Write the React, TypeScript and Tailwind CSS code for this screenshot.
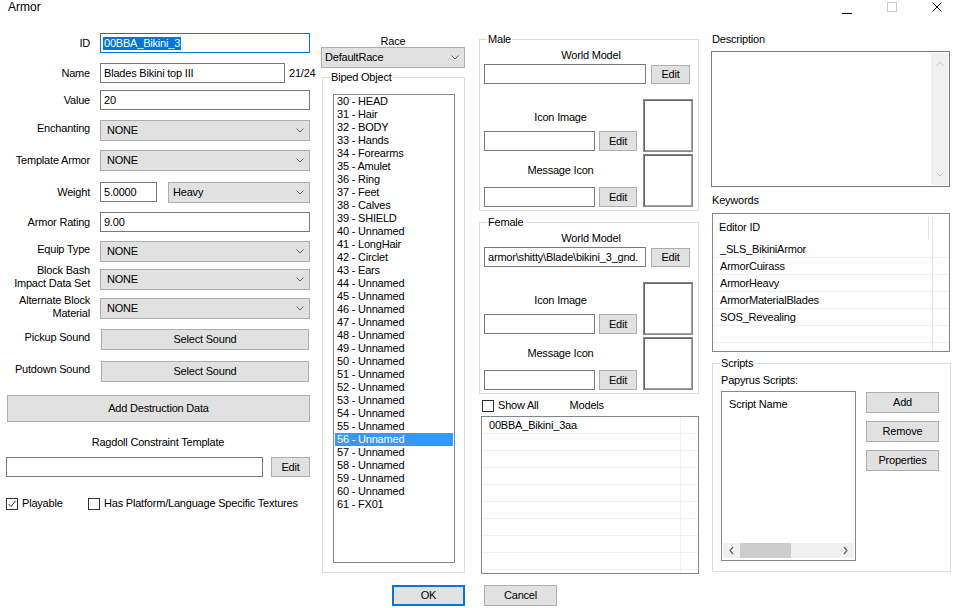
import React from "react";

const biped = [
  "30 - HEAD", "31 - Hair", "32 - BODY", "33 - Hands", "34 - Forearms", "35 - Amulet",
  "36 - Ring", "37 - Feet", "38 - Calves", "39 - SHIELD", "40 - Unnamed", "41 - LongHair",
  "42 - Circlet", "43 - Ears", "44 - Unnamed", "45 - Unnamed", "46 - Unnamed", "47 - Unnamed",
  "48 - Unnamed", "49 - Unnamed", "50 - Unnamed", "51 - Unnamed", "52 - Unnamed", "53 - Unnamed",
  "54 - Unnamed", "55 - Unnamed", "56 - Unnamed", "57 - Unnamed", "58 - Unnamed", "59 - Unnamed",
  "60 - Unnamed", "61 - FX01",
];

const keywords = ["_SLS_BikiniArmor", "ArmorCuirass", "ArmorHeavy", "ArmorMaterialBlades", "SOS_Revealing", "", ""];

function Chevron({ color = "#606060", up = false }: { color?: string; up?: boolean }) {
  return (
    <svg width="8" height="5" viewBox="0 0 8 5" className="shrink-0">
      <polyline points={up ? "0.5,4.5 4,1 7.5,4.5" : "0.5,0.5 4,4 7.5,0.5"} fill="none" stroke={color} strokeWidth="1" />
    </svg>
  );
}

function TextBox({ value = "", className = "" }: { value?: string; className?: string }) {
  return (
    <div className={`h-[20px] bg-white border border-[#7a7a7a] flex items-center pl-[3px] overflow-hidden whitespace-nowrap shrink-0 ${className}`}>
      {value}
    </div>
  );
}

function Combo({ value, className = "", pad = "pl-[6px]" }: { value: string; className?: string; pad?: string }) {
  return (
    <div className={`h-[21px] bg-[#e1e1e1] border border-[#adadad] flex items-center justify-between pr-[5px] shrink-0 ${pad} ${className}`}>
      <span>{value}</span>
      <Chevron />
    </div>
  );
}

function Btn({ label, className = "", edge = "border border-[#adadad]" }: { label: string; className?: string; edge?: string }) {
  return (
    <button type="button" className={`bg-[#e1e1e1] flex items-center justify-center shrink-0 ${edge} ${className}`}>
      {label}
    </button>
  );
}

function Check({ checked = false }: { checked?: boolean }) {
  return (
    <div className="w-[12px] h-[12px] border border-[#333333] bg-white shrink-0 flex items-center justify-center">
      {checked && (
        <svg width="10" height="10" viewBox="0 0 10 10">
          <polyline points="1.5,5 4,7.5 8.5,2" fill="none" stroke="#333333" strokeWidth="1" />
        </svg>
      )}
    </div>
  );
}

function Row({ label, children, className = "", labelClass = "" }: { label: React.ReactNode; children: React.ReactNode; className?: string; labelClass?: string }) {
  return (
    <div className={`flex items-center h-[20px] ${className}`}>
      <div className={`w-[84px] text-right leading-[13px] shrink-0 whitespace-nowrap ${labelClass}`}>{label}</div>
      <div className="ml-[10px] flex items-center">{children}</div>
    </div>
  );
}

function ImageBox() {
  return <div className="w-[50px] h-[53px] bg-white border border-[#8a8a8a] shadow-[inset_1px_1px_0_#646464,inset_-1px_-1px_0_#a0a0a0]" />;
}

function ModelGroup({ title, path, className = "" }: { title: string; path: string; className?: string }) {
  return (
    <fieldset className={`border border-[#dcdcdc] w-[220px] h-[178px] ${className}`}>
      <legend className="ml-[7px] px-[1px] leading-[13px]">{title}</legend>
      <div className="text-center leading-[13px] mt-[3px] pl-[4px]">World Model</div>
      <div className="flex items-center mt-[2px] ml-[4px] gap-[5px]">
        <TextBox value={path} className="w-[162px]" />
        <Btn label="Edit" className="w-[39px] h-[19px]" />
      </div>
      <div className="flex mt-[14px] ml-[4px]">
        <div className="w-[153px] flex flex-col">
          <div className="text-center leading-[13px] mt-[13px]">Icon Image</div>
          <div className="flex items-center mt-[7px] gap-[4px]">
            <TextBox className="w-[111px]" />
            <Btn label="Edit" className="w-[38px] h-[20px]" />
          </div>
          <div className="text-center leading-[13px] mt-[13px]">Message Icon</div>
          <div className="flex items-center mt-[10px] gap-[4px]">
            <TextBox className="w-[111px]" />
            <Btn label="Edit" className="w-[38px] h-[20px]" />
          </div>
        </div>
        <div className="ml-[6px] mt-[1px] flex flex-col gap-[2px]">
          <ImageBox />
          <ImageBox />
        </div>
      </div>
    </fieldset>
  );
}

export default function App() {
  return (
    <div className="w-[956px] h-[608px] bg-white overflow-hidden text-[11px] tracking-[-0.2px] text-black font-['Liberation_Sans',Arial,sans-serif] select-none">
      {/* Title bar */}
      <div className="h-[30px] flex items-start">
        <div className="pl-[8px] text-[12px] leading-[14px] tracking-normal">Armor</div>
        <div className="ml-auto flex items-start pr-[14px]">
          <div className="w-[10px] h-[1px] bg-black mt-[13px]" />
          <div className="w-[10px] h-[10px] border border-[#cccccc] mt-[2px] ml-[35px]" />
          <svg width="10" height="10" viewBox="0 0 10 10" className="mt-[2px] ml-[35px]">
            <line x1="0.5" y1="0.5" x2="9.5" y2="9.5" stroke="#000" strokeWidth="1" />
            <line x1="9.5" y1="0.5" x2="0.5" y2="9.5" stroke="#000" strokeWidth="1" />
          </svg>
        </div>
      </div>

      <div className="flex h-[555px]">
        {/* Column 1: basic fields */}
        <div className="ml-[6px] w-[304px] flex flex-col">
          <Row label="ID" className="mt-[3px]">
            <div className="h-[20px] w-[210px] bg-white border border-[#0078d7] flex items-center pl-[2px]">
              <span className="bg-[#0078d7] text-white leading-[13px] px-[1px]">00BBA_Bikini_3</span>
            </div>
          </Row>
          <Row label="Name" className="mt-[10px]">
            <TextBox value="Blades Bikini top III" className="w-[185px]" />
            <span className="ml-[4px]">21/24</span>
          </Row>
          <Row label="Value" className="mt-[7px]">
            <TextBox value="20" className="w-[210px]" />
          </Row>
          <Row label="Enchanting" className="mt-[10px] h-[21px]" labelClass="-mt-[4px]">
            <Combo value="NONE" className="w-[210px]" />
          </Row>
          <Row label="Template Armor" className="mt-[9px] h-[21px]">
            <Combo value="NONE" className="w-[210px]" />
          </Row>
          <Row label="Weight" className="mt-[11px]">
            <TextBox value="5.0000" className="w-[57px]" />
            <Combo value="Heavy" className="w-[142px] ml-[11px] h-[20px]" pad="pl-[4px]" />
          </Row>
          <Row label="Armor Rating" className="mt-[10px]">
            <TextBox value="9.00" className="w-[210px]" />
          </Row>
          <Row label="Equip Type" className="mt-[9px] h-[21px]" labelClass="-mt-[5px]">
            <Combo value="NONE" className="w-[210px]" />
          </Row>
          <Row label={<>Block Bash<br />Impact Data Set</>} className="mt-[7px] h-[21px]" labelClass="-mt-[5px]">
            <Combo value="NONE" className="w-[210px]" />
          </Row>
          <Row label={<>Alternate Block<br />Material</>} className="mt-[8px] h-[21px]" labelClass="-mt-[4px]">
            <Combo value="NONE" className="w-[210px]" />
          </Row>
          <Row label="Pickup Sound" className="mt-[10px] h-[21px]" labelClass="-mt-[4px]">
            <Btn label="Select Sound" className="w-[208px] h-[21px] ml-[1px]" />
          </Row>
          <Row label="Putdown Sound" className="mt-[11px] h-[21px]" labelClass="-mt-[4px]">
            <Btn label="Select Sound" className="w-[208px] h-[21px] ml-[1px]" />
          </Row>
          <Btn label="Add Destruction Data" className="mt-[13px] ml-[1px] w-[303px] h-[27px]" />
          <div className="mt-[14px] text-center leading-[13px]">Ragdoll Constraint Template</div>
          <div className="flex mt-[8px]">
            <TextBox className="w-[257px]" />
            <Btn label="Edit" className="w-[39px] h-[20px] ml-[8px]" />
          </div>
          <div className="flex items-center mt-[20px] h-[13px] leading-[13px] whitespace-nowrap">
            <Check checked />
            <span className="ml-[4px] w-[66px]">Playable</span>
            <Check />
            <span className="ml-[4px]">Has Platform/Language Specific Textures</span>
          </div>
        </div>

        {/* Column 2: race and biped slots */}
        <div className="ml-[11px] w-[144px] flex flex-col">
          <div className="mt-[5px] text-center leading-[12px]">Race</div>
          <Combo value="DefaultRace" className="w-[144px] h-[20px]" pad="pl-[3px]" />
          <fieldset className="mt-[3px] ml-[1px] w-[143px] h-[502px] border border-[#dcdcdc]">
            <legend className="ml-[7px] px-[1px] leading-[13px]">Biped Object</legend>
            <div className="mt-[10px] ml-[10px] w-[122px] h-[469px] border border-[#828790] px-[1px] overflow-hidden">
              {biped.map((b) => (
                <div
                  key={b}
                  className={`h-[13px] leading-[13px] pl-[2px] whitespace-nowrap ${b === "56 - Unnamed" ? "bg-[#3399ff] text-white" : ""}`}
                >
                  {b}
                </div>
              ))}
            </div>
          </fieldset>
        </div>

        {/* Column 3: models */}
        <div className="ml-[14px] w-[220px] flex flex-col">
          <ModelGroup title="Male" path="" className="mt-[3px]" />
          <ModelGroup title="Female" path="armor\shitty\Blade\bikini_3_gnd." className="mt-[5px] h-[177px]" />
          <div className="flex items-center mt-[5px] h-[13px] leading-[13px]">
            <div className="ml-[3px]"><Check /></div>
            <span className="ml-[4px]">Show All</span>
            <span className="ml-[31px]">Models</span>
          </div>
          <div className="mt-[4px] ml-[2px] w-[218px] h-[158px] border border-[#828790] relative overflow-hidden">
            {Array.from({ length: 9 }).map((_, i) => (
              <div key={i} className="h-[17px] border-b border-[#f0f0f0] flex items-center pl-[7px] leading-[13px]">
                {i === 0 ? "00BBA_Bikini_3aa" : ""}
              </div>
            ))}
            <div className="absolute top-0 bottom-0 left-[198px] w-[1px] bg-[#f0f0f0]" />
          </div>
        </div>

        {/* Column 4: description, keywords, scripts */}
        <div className="ml-[12px] w-[240px] flex flex-col">
          <div className="mt-[3px] pl-[1px] leading-[13px]">Description</div>
          <div className="mt-[5px] w-[239px] h-[136px] border border-[#7a7a7a] flex justify-end">
            <div className="w-[17px] my-[1px] mr-[1px] bg-[#f0f0f0] flex flex-col items-center justify-between py-[8px]">
              <Chevron color="#c0c0c0" up />
              <Chevron color="#c0c0c0" />
            </div>
          </div>
          <div className="mt-[7px] pl-[1px] leading-[13px]">Keywords</div>
          <div className="mt-[6px] ml-[1px] w-[238px] h-[139px] border border-[#828790] relative overflow-hidden">
            <div className="h-[27px] flex items-center pl-[6px] leading-[13px]">Editor ID</div>
            {keywords.map((k, i) => (
              <div key={i} className="h-[17px] border-b border-[#f0f0f0] flex items-center pl-[7px] leading-[13px]">
                {k}
              </div>
            ))}
            <div className="absolute top-[3px] h-[22px] left-[215px] w-[1px] bg-[#e5e5e5]" />
            <div className="absolute top-[3px] bottom-0 left-[219px] w-[1px] bg-[#e5e5e5]" />
          </div>
          <fieldset className="mt-[5px] ml-[1px] w-[239px] h-[215px] border border-[#dcdcdc]">
            <legend className="ml-[7px] px-[1px] leading-[13px]">Scripts</legend>
            <div className="mt-[4px] pl-[8px] leading-[13px]">Papyrus Scripts:</div>
            <div className="flex mt-[4px] ml-[8px]">
              <div className="w-[135px] h-[170px] border border-[#828790] flex flex-col">
                <div className="pl-[7px] pt-[6px] leading-[13px]">Script Name</div>
                <div className="mt-auto mb-[2px] mx-[1px] h-[15px] bg-[#f0f0f0] flex items-center">
                  <svg width="17" height="15" viewBox="0 0 17 15" className="shrink-0">
                    <polyline points="10,4 7,7.5 10,11" fill="none" stroke="#606060" strokeWidth="1.2" />
                  </svg>
                  <div className="w-[51px] h-[15px] bg-[#cdcdcd]" />
                  <svg width="17" height="15" viewBox="0 0 17 15" className="ml-auto shrink-0">
                    <polyline points="7,4 10,7.5 7,11" fill="none" stroke="#606060" strokeWidth="1.2" />
                  </svg>
                </div>
              </div>
              <div className="ml-[10px] flex flex-col">
                <Btn label="Add" className="mt-[1px] w-[73px] h-[21px]" />
                <Btn label="Remove" className="mt-[8px] w-[73px] h-[21px]" />
                <Btn label="Properties" className="mt-[8px] w-[73px] h-[21px]" />
              </div>
            </div>
          </fieldset>
        </div>
      </div>

      {/* Dialog buttons */}
      <div className="flex h-[20px]">
        <Btn label="OK" edge="border-2 border-[#0078d7]" className="ml-[392px] w-[73px] h-[21px]" />
        <Btn label="Cancel" className="ml-[19px] w-[73px] h-[21px]" />
      </div>
    </div>
  );
}
